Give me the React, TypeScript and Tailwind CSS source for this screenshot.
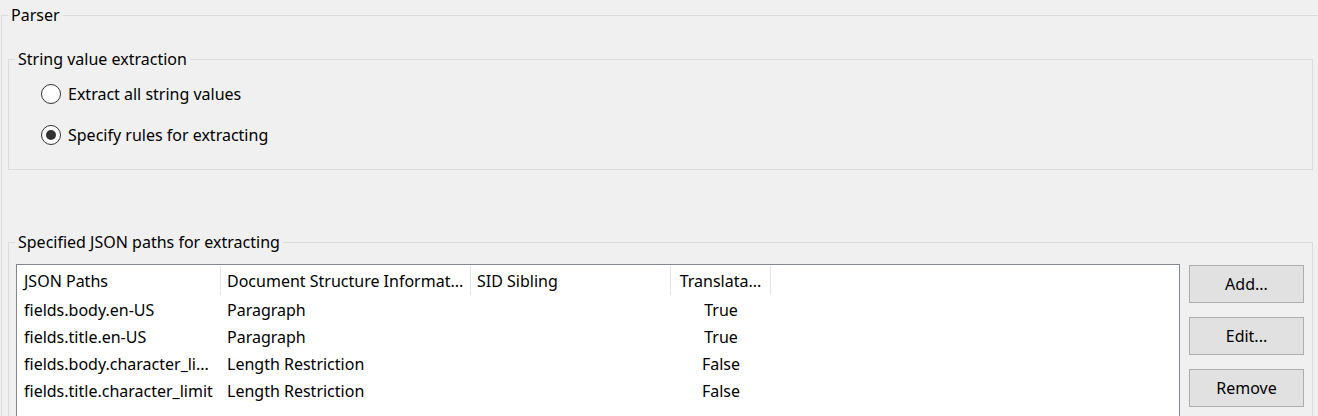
import React from "react";

interface PathRule {
  path: string;
  structure: string;
  sibling: string;
  translatable: string;
}

const rules: PathRule[] = [
  { path: "fields.body.en-US", structure: "Paragraph", sibling: "", translatable: "True" },
  { path: "fields.title.en-US", structure: "Paragraph", sibling: "", translatable: "True" },
  { path: "fields.body.character_li...", structure: "Length Restriction", sibling: "", translatable: "False" },
  { path: "fields.title.character_limit", structure: "Length Restriction", sibling: "", translatable: "False" },
];

function Radio({ checked, label }: { checked?: boolean; label: string }) {
  return (
    <label className="flex items-center h-[24px] gap-[7px]">
      <span className="w-[20px] h-[20px] rounded-full border border-[#333333] bg-white flex items-center justify-center">
        {checked && <span className="w-[10px] h-[10px] rounded-full bg-[#333333]" />}
      </span>
      <span>{label}</span>
    </label>
  );
}

export default function App() {
  return (
    <div className="h-[416px] w-full overflow-hidden bg-[#f0f0f0] text-[16px] text-black font-['Noto_Sans',sans-serif] leading-[20px]">
      <fieldset className="ml-[1px] mt-[5px] w-[1340px] border border-[#dcdcdc] px-[6px] pb-4">
        <legend className="px-[3px] leading-[20px]">Parser</legend>

        <fieldset className="mt-[24px] w-[1305px] border border-[#dcdcdc] pl-[32px] pt-[13px] pb-[22px]">
          <legend className="-ml-[26px] px-[3px] leading-[20px]">String value extraction</legend>
          <div className="flex flex-col gap-[17px]">
            <Radio label="Extract all string values" />
            <Radio checked label="Specify rules for extracting" />
          </div>
        </fieldset>

        <fieldset className="mt-[62px] w-[1305px] border border-[#dcdcdc] pl-[7px] pt-[12px]">
          <legend className="-ml-[1px] px-[3px] leading-[20px]">Specified JSON paths for extracting</legend>
          <div className="flex gap-[9px]">
            <div className="w-[1164px] h-[200px] border border-[#828790] bg-white">
              <div className="flex h-[31px] py-[1px]">
                <div className="w-[204px] border-r border-[#e5e5e5] pl-[7px] flex items-center">JSON Paths</div>
                <div className="w-[250px] border-r border-[#e5e5e5] pl-[6px] flex items-center">Document Structure Informat...</div>
                <div className="w-[200px] border-r border-[#e5e5e5] pl-[6px] flex items-center">SID Sibling</div>
                <div className="w-[100px] border-r border-[#e5e5e5] flex items-center justify-center">Translata...</div>
              </div>
              {rules.map((r) => (
                <div key={r.path} className="flex h-[27px] items-center">
                  <div className="w-[204px] pl-[7px] whitespace-nowrap overflow-hidden">{r.path}</div>
                  <div className="w-[250px] pl-[6px]">{r.structure}</div>
                  <div className="w-[200px] pl-[6px]">{r.sibling}</div>
                  <div className="w-[100px] text-center">{r.translatable}</div>
                </div>
              ))}
            </div>
            <div className="flex flex-col gap-[14px] pt-[1px]">
              <button className="w-[115px] h-[38px] bg-[#e1e1e1] border border-[#adadad]">Add...</button>
              <button className="w-[115px] h-[38px] bg-[#e1e1e1] border border-[#adadad]">Edit...</button>
              <button className="w-[115px] h-[38px] bg-[#e1e1e1] border border-[#adadad]">Remove</button>
            </div>
          </div>
        </fieldset>
      </fieldset>
    </div>
  );
}
